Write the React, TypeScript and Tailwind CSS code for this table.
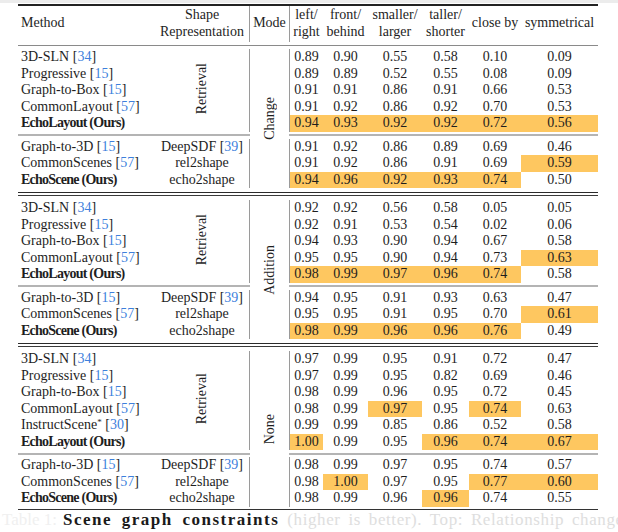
import React from 'react';

type Row = {
  name: string;
  cite?: string;
  bold?: boolean;
  star?: boolean;
  shape?: string;
  shapeCite?: string;
  vals: string[];
  hl?: number[];
};

type Section = { mode: string; retrieval: Row[]; generative: Row[] };

const grid = 'grid grid-cols-[137px_95px_39px_34px_45px_54px_47px_52px_77px]';

const spanRows: Record<number, string> = {
  5: 'row-span-5',
  6: 'row-span-6',
  9: 'row-span-9',
  10: 'row-span-10',
};

const generative = (vals: string[][], hls: number[][]): Row[] => [
  { name: 'Graph-to-3D', cite: '15', shape: 'DeepSDF', shapeCite: '39', vals: vals[0], hl: hls[0] },
  { name: 'CommonScenes', cite: '57', shape: 'rel2shape', vals: vals[1], hl: hls[1] },
  { name: 'EchoScene (Ours)', bold: true, shape: 'echo2shape', vals: vals[2], hl: hls[2] },
];

const sections: Section[] = [
  {
    mode: 'Change',
    retrieval: [
      { name: '3D-SLN', cite: '34', vals: ['0.89', '0.90', '0.55', '0.58', '0.10', '0.09'] },
      { name: 'Progressive', cite: '15', vals: ['0.89', '0.89', '0.52', '0.55', '0.08', '0.09'] },
      { name: 'Graph-to-Box', cite: '15', vals: ['0.91', '0.91', '0.86', '0.91', '0.66', '0.53'] },
      { name: 'CommonLayout', cite: '57', vals: ['0.91', '0.92', '0.86', '0.92', '0.70', '0.53'] },
      { name: 'EchoLayout (Ours)', bold: true, vals: ['0.94', '0.93', '0.92', '0.92', '0.72', '0.56'], hl: [0, 1, 2, 3, 4, 5] },
    ],
    generative: generative(
      [
        ['0.91', '0.92', '0.86', '0.89', '0.69', '0.46'],
        ['0.91', '0.92', '0.86', '0.91', '0.69', '0.59'],
        ['0.94', '0.96', '0.92', '0.93', '0.74', '0.50'],
      ],
      [[], [5], [0, 1, 2, 3, 4]]
    ),
  },
  {
    mode: 'Addition',
    retrieval: [
      { name: '3D-SLN ', cite: '34', vals: ['0.92', '0.92', '0.56', '0.58', '0.05', '0.05'] },
      { name: 'Progressive', cite: '15', vals: ['0.92', '0.91', '0.53', '0.54', '0.02', '0.06'] },
      { name: 'Graph-to-Box', cite: '15', vals: ['0.94', '0.93', '0.90', '0.94', '0.67', '0.58'] },
      { name: 'CommonLayout', cite: '57', vals: ['0.95', '0.95', '0.90', '0.94', '0.73', '0.63'], hl: [5] },
      { name: 'EchoLayout (Ours)', bold: true, vals: ['0.98', '0.99', '0.97', '0.96', '0.74', '0.58'], hl: [0, 1, 2, 3, 4] },
    ],
    generative: generative(
      [
        ['0.94', '0.95', '0.91', '0.93', '0.63', '0.47'],
        ['0.95', '0.95', '0.91', '0.95', '0.70', '0.61'],
        ['0.98', '0.99', '0.96', '0.96', '0.76', '0.49'],
      ],
      [[], [5], [0, 1, 2, 3, 4]]
    ),
  },
  {
    mode: 'None',
    retrieval: [
      { name: '3D-SLN', cite: '34', vals: ['0.97', '0.99', '0.95', '0.91', '0.72', '0.47'] },
      { name: 'Progressive', cite: '15', vals: ['0.97', '0.99', '0.95', '0.82', '0.69', '0.46'] },
      { name: 'Graph-to-Box', cite: '15', vals: ['0.98', '0.99', '0.96', '0.95', '0.72', '0.45'] },
      { name: 'CommonLayout', cite: '57', vals: ['0.98', '0.99', '0.97', '0.95', '0.74', '0.63'], hl: [2, 4] },
      { name: 'InstructScene', cite: '30', star: true, vals: ['0.99', '0.99', '0.85', '0.86', '0.52', '0.58'] },
      { name: 'EchoLayout (Ours)', bold: true, vals: ['1.00', '0.99', '0.95', '0.96', '0.74', '0.67'], hl: [0, 3, 4, 5] },
    ],
    generative: generative(
      [
        ['0.98', '0.99', '0.97', '0.95', '0.74', '0.57'],
        ['0.98', '1.00', '0.97', '0.95', '0.77', '0.60'],
        ['0.98', '0.99', '0.96', '0.96', '0.74', '0.55'],
      ],
      [[], [1, 4, 5], [3]]
    ),
  },
];

const Cite: React.FC<{ n: string }> = ({ n }) => (
  <>
    {' '}[<span className="text-[#3d7fdc]">{n}</span>]
  </>
);

const MethodCell: React.FC<{ r: Row }> = ({ r }) => (
  <div className={`h-[16.5px] leading-[16.5px] pl-[3px] whitespace-nowrap ${r.bold ? 'font-bold tracking-[-0.75px]' : ''}`}>
    {r.name}
    {r.star && <sup className="text-[9px]">*</sup>}
    {r.cite && <Cite n={r.cite} />}
  </div>
);

const Nums: React.FC<{ r: Row }> = ({ r }) => (
  <>
    {r.vals.map((v, i) => (
      <div
        key={i}
        className={`h-[16.5px] leading-[16.5px] text-center ${r.hl?.includes(i) ? 'bg-[#fec760]' : ''} ${i === 0 ? 'border-l border-[#9a9a9a]' : ''}`}
      >
        {v}
      </div>
    ))}
  </>
);

const Vertical: React.FC<{ text: string }> = ({ text }) => (
  <span className="[writing-mode:vertical-rl] rotate-180 leading-none">{text}</span>
);

const SectionBlock: React.FC<{ s: Section }> = ({ s }) => {
  const total = s.retrieval.length + 1 + s.generative.length;
  return (
    <div className={grid}>
      {s.retrieval.map((r, i) => (
        <React.Fragment key={i}>
          <MethodCell r={r} />
          {i === 0 && (
            <>
              <div className={`${spanRows[s.retrieval.length]} border-r border-[#9a9a9a] flex items-center justify-center pb-[4px]`}>
                <Vertical text="Retrieval" />
              </div>
              <div className={`${spanRows[total]} flex items-center justify-center`}>
                <Vertical text={s.mode} />
              </div>
            </>
          )}
          <Nums r={r} />
        </React.Fragment>
      ))}

      {/* cmidrules */}
      <div className="col-span-2 h-[7px] flex items-center">
        <div className="h-[2px] w-full bg-[#b4b4b4]" />
      </div>
      <div className="col-span-6 h-[7px] flex items-center">
        <div className="h-[2px] w-full bg-[#b4b4b4]" />
      </div>

      {s.generative.map((r, i) => (
        <React.Fragment key={`g${i}`}>
          <MethodCell r={r} />
          <div className="h-[16.5px] leading-[16.5px] text-center whitespace-nowrap border-r border-[#9a9a9a]">
            {r.shape}
            {r.shapeCite && <Cite n={r.shapeCite} />}
          </div>
          <Nums r={r} />
        </React.Fragment>
      ))}
    </div>
  );
};

const DoubleRule: React.FC = () => (
  <div className="h-[12px] pt-[3.5px]">
    <div className="h-px bg-[#2a2a2a]" />
    <div className="h-px mt-[2.5px] bg-[#3a3a3a]" />
  </div>
);

const headers = [
  ['left/', 'right'],
  ['front/', 'behind'],
  ['smaller/', 'larger'],
  ['taller/', 'shorter'],
  ['close by'],
  ['symmetrical'],
];

export default function App() {
  return (
    <div className="w-[618px] h-[532px] bg-white overflow-hidden text-[14px] text-[#1e1e1e] [font-family:'Liberation_Serif',serif]">
      <div className="h-[3px] bg-[#ececec]" />
      <div className="w-[580px] ml-[18px]">
        <div className="mt-[1px] h-[1.5px] bg-[#222]" />

        {/* header */}
        <div className={`${grid} h-[36px] leading-[16.5px]`}>
          <div className="pl-[3px] flex items-center">Method</div>
          <div className="flex flex-col items-center justify-center border-r border-[#9a9a9a]">
            <span>Shape</span>
            <span>Representation</span>
          </div>
          <div className="flex items-center justify-center">Mode</div>
          {headers.map((h, i) => (
            <div
              key={i}
              className={`flex flex-col items-center justify-center whitespace-nowrap ${i === 0 ? 'border-l border-[#9a9a9a]' : ''}`}
            >
              {h.map((line) => (
                <span key={line}>{line}</span>
              ))}
            </div>
          ))}
        </div>
        <div className="h-[7.5px] pt-[3px]">
          <div className="h-px bg-[#8a8a8a]" />
        </div>

        <SectionBlock s={sections[0]} />
        <DoubleRule />
        <SectionBlock s={sections[1]} />
        <DoubleRule />
        <SectionBlock s={sections[2]} />

        <div className="mt-[2px] h-[1.5px] bg-[#333]" />
      </div>

      {/* caption */}
      <div className="flex whitespace-nowrap text-[17px] leading-[20px] pl-[2px]">
        <span className="text-[#f0f0f0]">Table 1:</span>
        <span className="ml-[6px] font-bold tracking-[1.5px] [word-spacing:4px] text-[#1a1a1a]">Scene graph constraints</span>
        <span className="ml-[8px] text-[#dedede] tracking-[0.6px] [word-spacing:3px]">(higher is better). Top: Relationship changes</span>
      </div>
    </div>
  );
}
